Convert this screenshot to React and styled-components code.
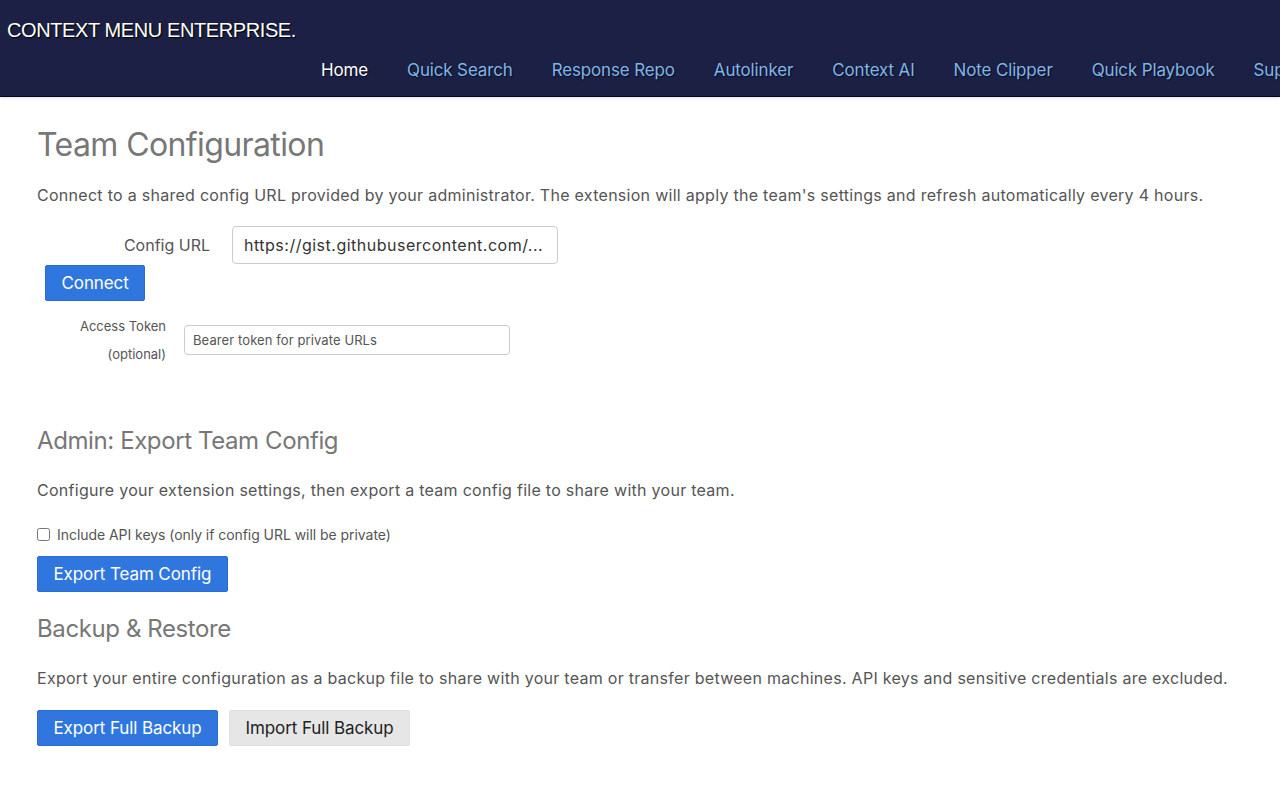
import React, {useState} from 'react';
import styled, {createGlobalStyle} from 'styled-components';

const GlobalStyle = createGlobalStyle`
  html, body {
    margin: 0;
    padding: 0;
    background: #fff;
  }
  body {
    font-family: Inter, "Liberation Sans", Arial, sans-serif;
    overflow: hidden;
  }
`;

const Header = styled.header`
  height: 96px;
  background: #1b2044;
  border-bottom: 1px solid #06081a;
  box-shadow: 0 1px 3px rgba(0, 0, 0, 0.12);
  overflow: hidden;
`;

const Brand = styled.div`
  padding: 19px 0 0 7px;
  height: 26px;
  font-family: "Liberation Sans", Arial, sans-serif;
  font-size: 20px;
  color: #fff;
  text-shadow: 1px 1px 1px #000;
  letter-spacing: -0.4px;
`;

const Nav = styled.nav`
  display: flex;
  gap: 39px;
  padding: 15px 0 0 321px;
  white-space: nowrap;
`;

const NavLink = styled.a`
  font-size: 17px;
  letter-spacing: -0.15px;
  color: ${p => (p.active ? '#fff' : '#7fb5ea')};
  text-decoration: none;
  text-shadow: 1px 1px 1px rgba(0, 0, 0, 0.6);
  cursor: pointer;
`;

const Main = styled.main`
  padding: 24px 37px 40px;
  color: #555;
`;

const Title = styled.h1`
  margin: 0;
  font-size: 32px;
  font-weight: 400;
  letter-spacing: -0.6px;
  color: #777;
  line-height: 48px;
`;

const SubTitle = styled.h2`
  margin: ${p => p.margin || '0'};
  font-size: 24px;
  font-weight: 400;
  letter-spacing: -0.4px;
  color: #777;
  line-height: 36px;
`;

const Text = styled.p`
  margin: ${p => p.margin || '0'};
  font-size: 16px;
  line-height: 24px;
  letter-spacing: 0.28px;
  color: #555;
`;

const FieldRow = styled.div`
  display: flex;
  align-items: center;
  gap: ${p => p.gap || '22px'};
  margin: ${p => p.margin || '0'};
`;

const Label = styled.label`
  width: ${p => p.width};
  text-align: right;
  font-size: ${p => p.size || '16px'};
  line-height: ${p => p.lh || '24px'};
  color: #555;
`;

const Input = styled.input`
  box-sizing: border-box;
  width: 326px;
  height: ${p => p.h || '38px'};
  padding: 0 ${p => p.pad || '11px'};
  font-family: Inter, "Liberation Sans", Arial, sans-serif;
  font-size: ${p => p.size || '16px'};
  letter-spacing: ${p => p.ls || '0.5px'};
  color: #333;
  border: 1px solid #ccc;
  border-radius: 4px;
  outline: none;
  &::placeholder {
    color: #555;
  }
`;

const Button = styled.button`
  box-sizing: border-box;
  height: 36px;
  padding: 0 15.5px;
  font-family: Inter, "Liberation Sans", Arial, sans-serif;
  font-size: 17px;
  letter-spacing: -0.1px;
  color: ${p => (p.secondary ? '#222' : '#fff')};
  background: ${p => (p.secondary ? '#e6e6e6' : '#2f76de')};
  border: 1px solid ${p => (p.secondary ? '#e0e0e0' : '#2a6bd0')};
  border-radius: 2px;
  cursor: pointer;
`;

const ButtonRow = styled.div`
  display: flex;
  gap: 11px;
  margin: ${p => p.margin || '0'};
  padding-left: ${p => p.indent || '0'};
`;

const CheckRow = styled.label`
  display: flex;
  align-items: center;
  gap: 7px;
  margin: 24px 0 13px;
  font-size: 14px;
  letter-spacing: -0.05px;
  color: #555;
`;

const Check = styled.input`
  margin: 0;
  width: 13px;
  height: 13px;
`;

const navItems = [
  'Home',
  'Quick Search',
  'Response Repo',
  'Autolinker',
  'Context AI',
  'Note Clipper',
  'Quick Playbook',
  'Support',
];

const App = () => {
  const [url, setUrl] = useState('https://gist.githubusercontent.com/...');
  const [withKeys, setWithKeys] = useState(false);

  return (
    <>
      <GlobalStyle />
      <Header>
        <Brand>CONTEXT MENU ENTERPRISE.</Brand>
        <Nav>
          {navItems.map(item => (
            <NavLink key={item} active={item === 'Home'}>
              {item}
            </NavLink>
          ))}
        </Nav>
      </Header>
      <Main>
        <Title>Team Configuration</Title>
        <Text margin="14px 0 0">
          Connect to a shared config URL provided by your administrator. The extension will apply the team's settings and refresh automatically every 4 hours.
        </Text>
        <FieldRow margin="19px 0 0">
          <Label width="173px">Config URL</Label>
          <Input value={url} onChange={e => setUrl(e.target.value)} />
        </FieldRow>
        <ButtonRow indent="8px" margin="1px 0 0">
          <Button>Connect</Button>
        </ButtonRow>
        <FieldRow gap="18px" margin="11px 0 0">
          <Label width="129px" size="13px" lh="28px">
            Access Token<br />(optional)
          </Label>
          <Input h="30px" size="13px" pad="8px" ls="0.1px" placeholder="Bearer token for private URLs" />
        </FieldRow>

        <SubTitle margin="55px 0 0">Admin: Export Team Config</SubTitle>
        <Text margin="19px 0 0">
          Configure your extension settings, then export a team config file to share with your team.
        </Text>
        <CheckRow>
          <Check type="checkbox" checked={withKeys} onChange={e => setWithKeys(e.target.checked)} />
          <span>Include API keys (only if config URL will be private)</span>
        </CheckRow>
        <Button>Export Team Config</Button>

        <SubTitle margin="19px 0 0">Backup &amp; Restore</SubTitle>
        <Text margin="19px 0 0">
          Export your entire configuration as a backup file to share with your team or transfer between machines. API keys and sensitive credentials are excluded.
        </Text>
        <ButtonRow margin="20px 0 0">
          <Button>Export Full Backup</Button>
          <Button secondary>Import Full Backup</Button>
        </ButtonRow>
      </Main>
    </>
  );
};

export default App;
